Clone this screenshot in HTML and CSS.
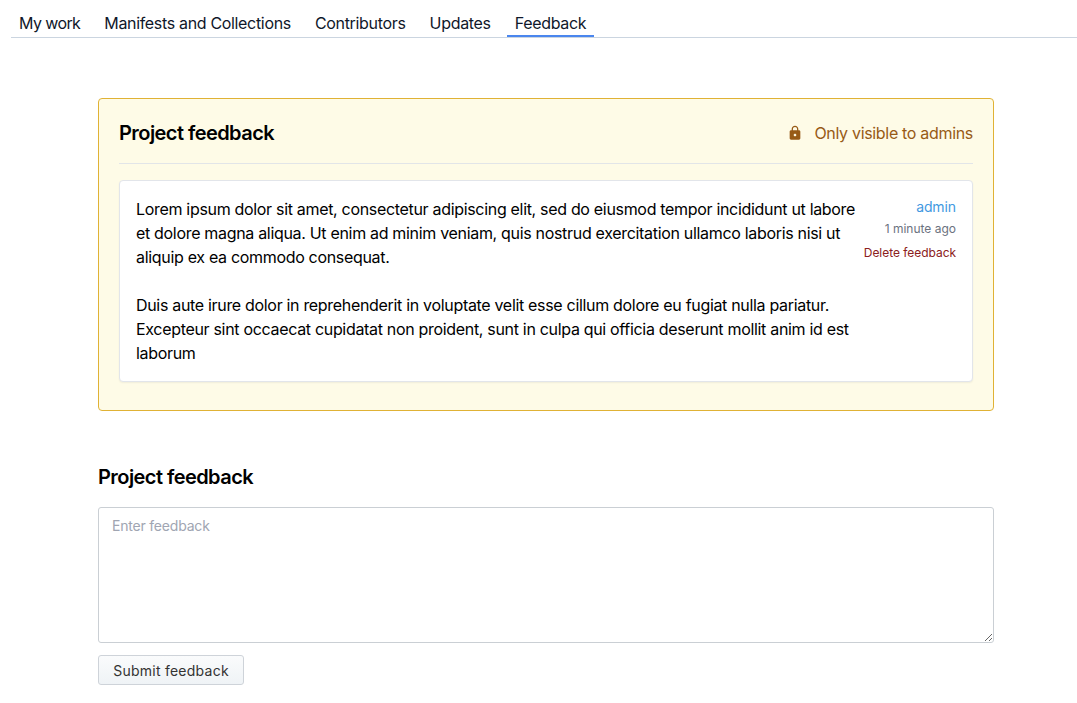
FILE: index.html
```html
<!DOCTYPE html>
<html lang="en">
<head>
<meta charset="utf-8">
<title>Project feedback</title>
<link rel="stylesheet" href="styles.css">
</head>
<body>
<nav class="tabs">
  <a class="tab tab-work">My work</a>
  <a class="tab tab-manifests">Manifests and Collections</a>
  <a class="tab tab-contributors">Contributors</a>
  <a class="tab tab-updates">Updates</a>
  <a class="tab tab-active">Feedback</a>
</nav>
<main class="content">
  <section class="admin-panel">
    <header class="panel-header">
      <h2 class="heading">Project feedback</h2>
      <div class="visibility">
        <svg class="lock" viewBox="0 0 24 24" width="16" height="16"><path fill="currentColor" d="M18 8h-1V6c0-2.760-2.240-5-5-5S7 3.240 7 6v2H6c-1.100 0-2 .9-2 2v10c0 1.100.9 2 2 2h12c1.100 0 2-.9 2-2V10c0-1.100-.9-2-2-2zm-6 9c-1.100 0-2-.9-2-2s.9-2 2-2 2 .9 2 2-.9 2-2 2zm3.100-9H8.900V6c0-1.710 1.390-3.100 3.100-3.100 1.710 0 3.100 1.390 3.100 3.100v2z"/></svg>
        <span class="visibility-label">Only visible to admins</span>
      </div>
    </header>
    <article class="feedback">
      <div class="feedback-body">Lorem ipsum dolor sit amet, consectetur adipiscing elit, sed do eiusmod tempor incididunt ut labore<br>et dolore magna aliqua. Ut enim ad minim veniam, quis nostrud exercitation ullamco laboris nisi ut<br>aliquip ex ea commodo consequat.<br><br>Duis aute irure dolor in reprehenderit in voluptate velit esse cillum dolore eu fugiat nulla pariatur.<br>Excepteur sint occaecat cupidatat non proident, sunt in culpa qui officia deserunt mollit anim id est<br>laborum</div>
      <div class="feedback-meta">
        <a class="author">admin</a>
        <span class="time">1 minute ago</span>
        <a class="delete">Delete feedback</a>
      </div>
    </article>
  </section>
  <form class="feedback-form">
    <h2 class="heading">Project feedback</h2>
    <textarea class="input" placeholder="Enter feedback"></textarea>
    <button class="submit" type="button">Submit feedback</button>
  </form>
</main>
</body>
</html>
```
FILE: styles.css
```css
* { box-sizing: border-box; }
body {
  margin: 0;
  background: #fff;
  color: #000;
  font: 16px/24px Inter, "Liberation Sans", sans-serif;
  letter-spacing: -0.317px;
  overflow: hidden;
}
.tabs {
  display: flex;
  gap: 8px;
  height: 38px;
  margin-left: 11px;
  padding-top: 7px;
  border-bottom: 1px solid #cbd5e0;
  color: #0f172a;
}
.tab { height: 30px; padding: 4px 8px 0; white-space: nowrap; }
.tab-work { letter-spacing: -0.6px; }
.tab-manifests { letter-spacing: -0.33px; }
.tab-active { border-bottom: 2px solid #4a86ee; }
.content { width: 896px; margin: 60px 0 0 98px; }
.admin-panel {
  height: 313px;
  padding: 20px;
  border: 1px solid #e0b235;
  border-radius: 4px;
  background: #fefbe7;
}
.panel-header {
  display: flex;
  justify-content: space-between;
  align-items: flex-start;
  height: 45px;
  border-bottom: 1px solid #e2e5e8;
}
.heading { margin: 0; font-size: 20px; line-height: 28px; font-weight: 600; letter-spacing: -0.56px; }
.visibility { display: flex; align-items: center; gap: 11px; height: 28px; color: #975a16; }
.lock { display: block; }
.feedback {
  display: flex;
  justify-content: space-between;
  margin-top: 16px;
  padding: 16px;
  height: 202px;
  background: #fff;
  border: 1px solid #e2e5ea;
  border-radius: 4px;
  box-shadow: 0 1px 2px rgba(0, 0, 0, .06);
}
.feedback-body { width: 724px; white-space: nowrap; }
.feedback-meta { display: flex; flex-direction: column; align-items: flex-end; white-space: nowrap; }
.author { font-size: 14px; line-height: 20px; letter-spacing: -0.1px; color: #4299e1; }
.time { font-size: 12px; line-height: 24px; letter-spacing: 0; color: #6b7280; }
.delete { font-size: 12px; line-height: 24px; letter-spacing: -0.04px; color: #8b2020; }
.feedback-form { margin-top: 52px; }
.input {
  display: block;
  width: 896px;
  height: 136px;
  margin-top: 16px;
  padding: 8px 13px;
  border: 1px solid #cacfd4;
  border-radius: 3px;
  outline: 0;
  resize: vertical;
  font: 14px/20px Inter, sans-serif;
  letter-spacing: -0.2px;
}
.input::placeholder { color: #a0a5b2; }
.submit {
  display: block;
  width: 146px;
  height: 30px;
  margin-top: 12px;
  padding: 2px 0 0;
  border: 1px solid #ced3d9;
  border-radius: 3px;
  background: linear-gradient(#fafbfc, #eff3f6);
  color: #333;
  font: 14px/20px Inter, sans-serif;
  letter-spacing: .25px;
}
```
